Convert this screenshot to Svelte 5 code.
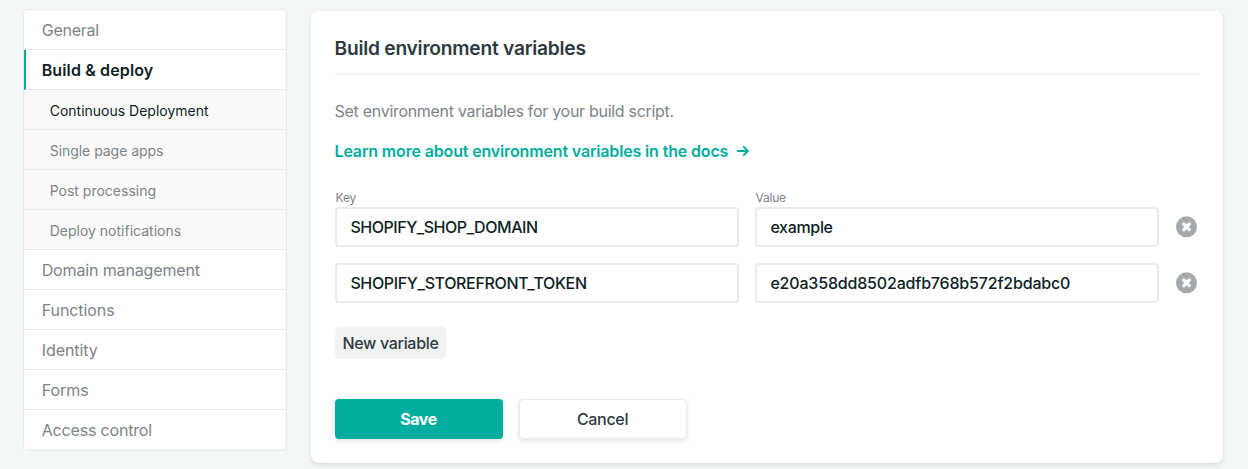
<script>
  const nav = [
    { label: 'General', ls: -0.24 },
    { label: 'Build & deploy', ls: 0.13, active: true },
    { label: 'Continuous Deployment', ls: 0, sub: true, current: true },
    { label: 'Single page apps', ls: -0.04, sub: true },
    { label: 'Post processing', ls: 0, sub: true },
    { label: 'Deploy notifications', ls: 0, sub: true },
    { label: 'Domain management', ls: -0.14 },
    { label: 'Functions', ls: -0.07 },
    { label: 'Identity', ls: -0.05 },
    { label: 'Forms', ls: -0.05 },
    { label: 'Access control', ls: -0.17 }
  ];
  const rows = [
    { key: 'SHOPIFY_SHOP_DOMAIN', ks: -0.47, value: 'example', vs: -0.33 },
    { key: 'SHOPIFY_STOREFRONT_TOKEN', ks: -0.36, value: 'e20a358dd8502adfb768b572f2bdabc0', vs: -0.18 }
  ];
</script>

<div class="page">
  <nav class="sidebar">
    {#each nav as item}
      <a class="item" class:active={item.active} class:sub={item.sub} class:current={item.current} style:letter-spacing="{item.ls}px">{item.label}</a>
    {/each}
  </nav>
  <main>
    <section class="card">
      <h2>Build environment variables</h2>
      <p class="desc">Set environment variables for your build script.</p>
      <a class="docs">
        <span>Learn more about environment variables in the docs</span>
        <svg width="13" height="12" viewBox="0 0 13 12"><path d="M1 6H11.8M7.2 1.3L11.9 6L7.2 10.7" fill="none" stroke="#00ad9f" stroke-width="1.9" /></svg>
      </a>
      <div class="labels"><span>Key</span><span>Value</span></div>
      {#each rows as row}
        <div class="row">
          <div class="input" style:letter-spacing="{row.ks}px">{row.key}</div>
          <div class="input" style:letter-spacing="{row.vs}px">{row.value}</div>
          <svg width="22" height="22" viewBox="0 0 22 22">
            <circle cx="10.5" cy="10.8" r="10.5" fill="#a3a9ac" />
            <path d="M7.7 8L13.3 13.6M13.3 8L7.7 13.6" stroke="#fff" stroke-width="3.3" stroke-linecap="round" />
          </svg>
        </div>
      {/each}
      <button class="new">New variable</button>
      <div class="actions">
        <button class="save">Save</button>
        <button class="cancel">Cancel</button>
      </div>
    </section>
  </main>
</div>

<style>
  :global(body) { background: #f2f6f7; overflow: hidden; }
  .page {
    box-sizing: border-box;
    height: 469px;
    padding: 9px 25px 0 23px;
    display: flex;
    align-items: flex-start;
    gap: 24px;
    font-family: Inter, "Liberation Sans", sans-serif;
    font-size: 16px;
    color: #0e1e25;
  }
  .sidebar {
    box-sizing: border-box;
    width: 264px;
    height: 442px;
    background: #fff;
    border: 1px solid #e6eaeb;
    border-radius: 4px;
    overflow: hidden;
    flex: none;
  }
  .item {
    box-sizing: border-box;
    display: block;
    height: 40px;
    padding-left: 17.7px;
    line-height: 41px;
    border-bottom: 1px solid #e7e9ea;
    color: #7b8488;
  }
  .item:last-child { border-bottom: 0; }
  .active { border-left: 2px solid #00ad9f; padding-left: 15.7px; color: #0e1e25; font-weight: 600; }
  .sub { background: #fafafa; font-size: 14px; padding-left: 25.7px; line-height: 42px; }
  .current { color: #0e1e25; }
  main { width: 912px; padding-top: 2px; }
  .card {
    box-sizing: border-box;
    height: 452px;
    padding: 24px 23px 0 24px;
    background: #fff;
    border-radius: 8px;
    box-shadow: 0 2px 4px rgba(14, 30, 37, 0.12);
  }
  h2 {
    box-sizing: border-box;
    height: 40px;
    margin: 0;
    line-height: 26px;
    font-size: 19.2px;
    font-weight: 600;
    letter-spacing: -0.24px;
    text-indent: -0.5px;
    color: #2d3b41;
    border-bottom: 2px solid #f4f5f5;
  }
  .desc { margin: 24px 0 0; line-height: 24px; letter-spacing: -0.3px; text-indent: -0.4px; color: #7b8488; }
  .docs {
    display: flex;
    align-items: center;
    gap: 8px;
    margin-top: 16px;
    height: 24px;
    color: #00ad9f;
    font-weight: 600;
    letter-spacing: -0.15px;
  }
  .docs span { text-indent: -0.5px; }
  .labels {
    display: grid;
    grid-template-columns: 404px 404px;
    gap: 16px;
    margin-top: 26px;
    height: 18px;
    line-height: 18px;
    font-size: 12px;
    letter-spacing: -0.2px;
    color: #7b8488;
  }
  .labels span { padding-left: 0.5px; }
  .row {
    display: grid;
    grid-template-columns: 404px 404px 22px;
    gap: 16px;
    align-items: center;
    height: 40px;
    margin-bottom: 16px;
  }
  .input {
    box-sizing: border-box;
    height: 40px;
    padding-left: 13.4px;
    line-height: 36px;
    border: 2px solid #e9ebeb;
    border-radius: 4px;
    font-weight: 500;
  }
  .row svg { margin-left: 1px; }
  button { font: 500 16px/24px Inter, "Liberation Sans", sans-serif; letter-spacing: -0.31px; color: #2d3b41; border: 0; border-radius: 4px; padding: 0; }
  .new { display: block; width: 111px; height: 32px; margin-top: 24px; background: #f1f2f2; }
  .actions { display: flex; gap: 16px; margin-top: 40px; }
  .actions button { box-sizing: border-box; width: 168px; height: 40px; padding-right: 1px; box-shadow: 0 2px 4px rgba(14, 30, 37, 0.12); }
  .actions .save { background: #00ad9f; color: #fff; font-weight: 700; letter-spacing: -0.5px; }
  .actions .cancel { background: #fff; border: 1px solid #e9ebeb; }
</style>
